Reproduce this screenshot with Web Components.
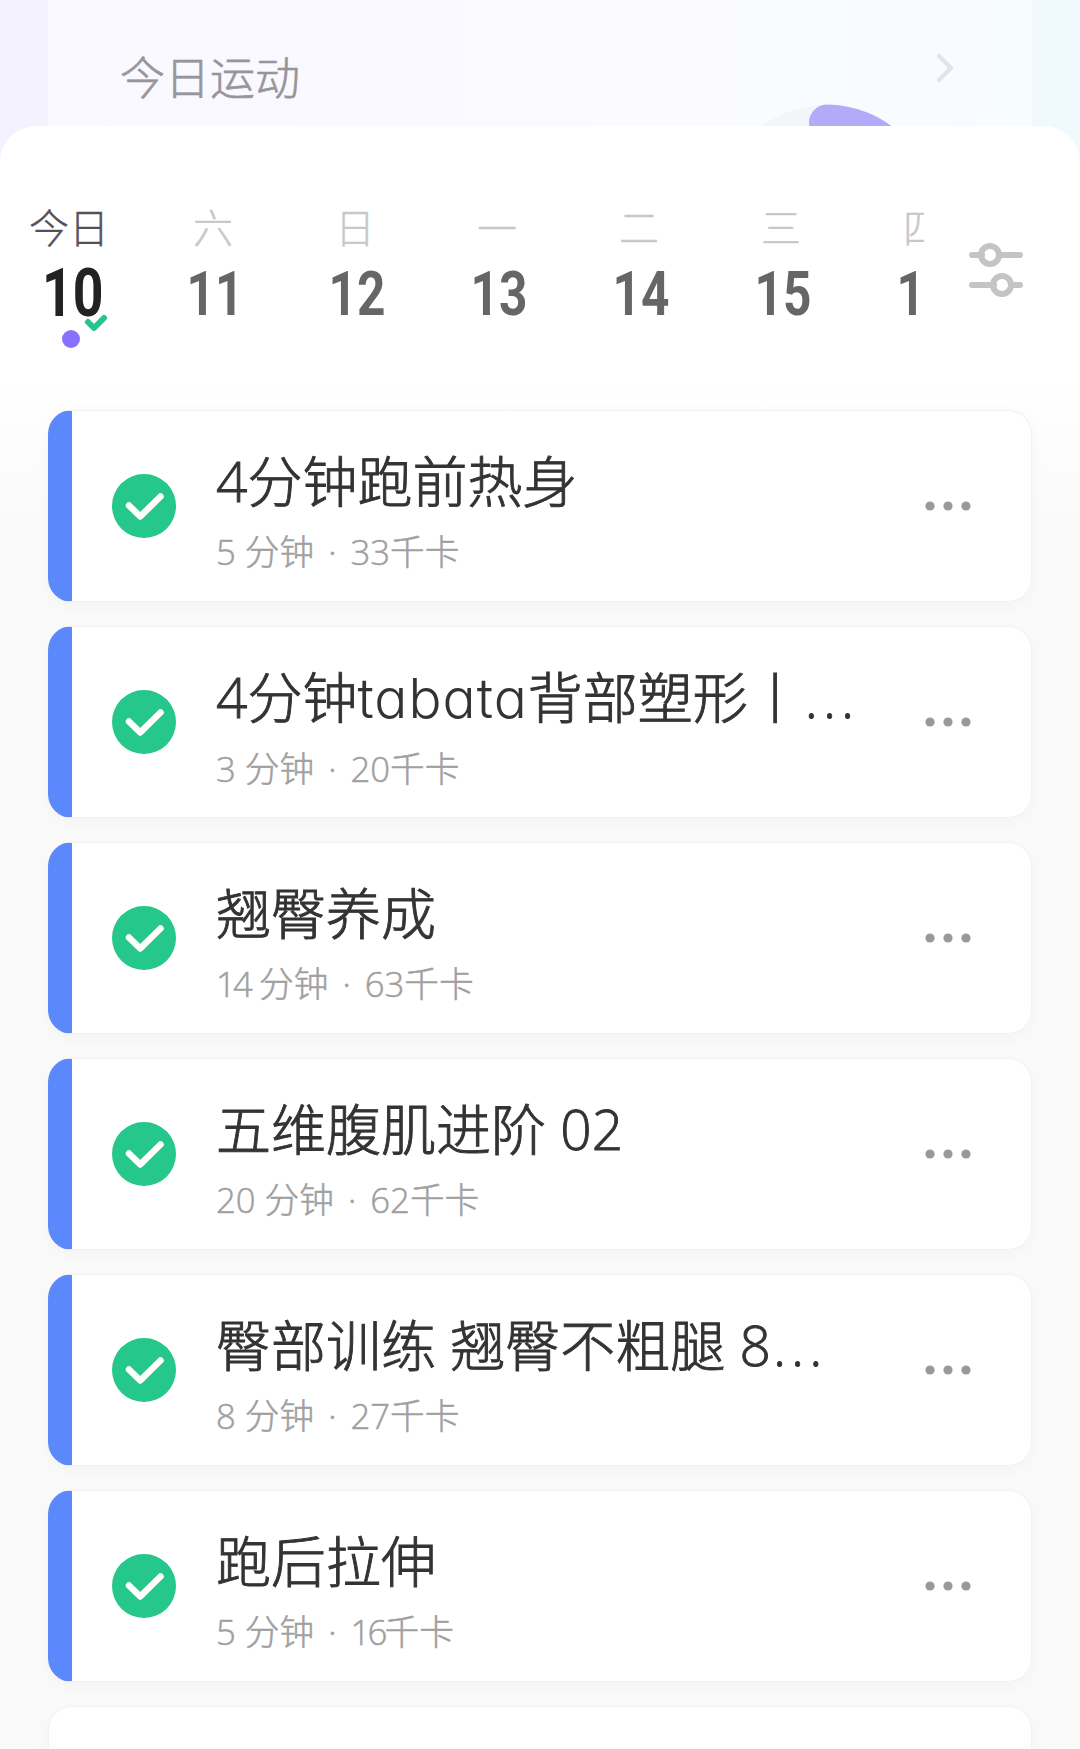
<!DOCTYPE html>
<html lang="zh-CN">
<head>
<meta charset="utf-8">
<title>今日运动</title>
<style>
  body {
    margin: 0;
    font-family: "Open Sans", "Noto Sans CJK SC", sans-serif;
    font-weight: 300;
  }
</style>
</head>
<body>
<workout-page>
  <today-banner slot="banner">今日运动</today-banner>
  <week-strip slot="week">
    <week-day label="今日" date="10" active></week-day>
    <week-day label="六" date="11"></week-day>
    <week-day label="日" date="12"></week-day>
    <week-day label="一" date="13"></week-day>
    <week-day label="二" date="14"></week-day>
    <week-day label="三" date="15"></week-day>
    <week-day label="四" date="16"></week-day>
  </week-strip>
  <workout-card time="5" energy="33">4分钟跑前热身</workout-card>
  <workout-card time="3" energy="20">4分钟<span class="latin">tabata</span>背部塑形丨<span class="more">...</span></workout-card>
  <workout-card time="14" energy="63">翘臀养成</workout-card>
  <workout-card time="20" energy="62">五维腹肌进阶 02</workout-card>
  <workout-card time="8" energy="27">臀部训练 翘臀不粗腿 8<span class="more">...</span></workout-card>
  <workout-card time="5" energy="16">跑后拉伸</workout-card>
  <workout-card empty></workout-card>
</workout-page>

<script>
const page = document.createElement('template')
page.innerHTML = `
<style>
  :host {
    display: flex;
    flex-direction: column;
    height: 1749px;
    overflow: hidden;
    background: linear-gradient(90deg, #f4f2ff 0%, #f6f5ff 45%, #f3f6fe 88%, #effafd 100%);
  }
  main {
    flex: 1;
    min-height: 0;
    border-radius: 36px 36px 0 0;
    background: linear-gradient(#fff 250px, #fafafa 400px);
  }
  .list {
    display: flex;
    flex-direction: column;
    gap: 24px;
    padding: 0 48px;
  }
</style>
<slot name="banner"></slot>
<main>
  <slot name="week"></slot>
  <div class="list"><slot></slot></div>
</main>
`
class WorkoutPage extends HTMLElement {
  constructor () {
    super()
    this.attachShadow({ mode: 'open' })
    this.shadowRoot.appendChild(page.content.cloneNode(true))
  }
}

const banner = document.createElement('template')
banner.innerHTML = `
<style>
  :host {
    display: block;
    height: 126px;
    padding: 0 48px;
    overflow: hidden;
  }
  .card {
    position: relative;
    display: flex;
    justify-content: space-between;
    align-items: flex-start;
    height: 126px;
    box-sizing: border-box;
    padding: 46px 76px 0 72px;
    background: linear-gradient(90deg, #f9f8ff 0%, #fbfaff 62%, #fafbff 70%, #f7fcff 100%);
  }
  h2 {
    margin: 2px 0 0;
    font-size: 45px;
    line-height: 60px;
    font-weight: inherit;
    color: #96959b;
    -webkit-text-stroke: .6px;
  }
  .ring {
    position: absolute;
    right: 94px;
    top: 102px;
  }
  .arrow { margin-top: 7px; }
  svg { display: block; }
</style>
<div class="card">
  <svg class="ring" width="224" height="224" viewBox="0 0 224 224" fill="none" stroke-width="36">
    <circle cx="112" cy="113" r="92" stroke="#f4f5f8"/>
    <path d="M113 20.500A92 92 0 0 1 204 113" stroke="#b5aaf9" stroke-linecap="round"/>
  </svg>
  <h2><slot></slot></h2>
  <svg class="arrow" width="20" height="30" viewBox="0 0 20 30" fill="none" stroke="#e1e3e6" stroke-width="4">
    <path d="M2 2L15 15L2 28"/>
  </svg>
</div>
`
class TodayBanner extends HTMLElement {
  constructor () {
    super()
    this.attachShadow({ mode: 'open' })
    this.shadowRoot.appendChild(banner.content.cloneNode(true))
  }
}

const strip = document.createElement('template')
strip.innerHTML = `
<style>
  :host {
    display: flex;
    height: 284px;
    box-sizing: border-box;
    padding-top: 76px;
  }
  .days {
    display: flex;
    width: 924px;
    overflow: hidden;
  }
  svg {
    display: block;
    margin: 38px 0 0 44px;
  }
</style>
<div class="days"><slot></slot></div>
<svg width="56" height="60" viewBox="0 0 56 60" fill="none" stroke="#c4c4c4" stroke-width="6" stroke-linecap="round">
  <path d="M4 15H14M31 15H52M4 45H26M43 45H52"/>
  <circle cx="22" cy="15" r="9"/>
  <circle cx="34" cy="45" r="9"/>
</svg>
`
class WeekStrip extends HTMLElement {
  constructor () {
    super()
    this.attachShadow({ mode: 'open' })
    this.shadowRoot.appendChild(strip.content.cloneNode(true))
  }
}

const day = document.createElement('template')
day.innerHTML = `
<style>
  :host {
    position: relative;
    display: flex;
    flex: none;
    flex-direction: column;
    align-items: center;
    width: 142px;
    color: #666;
  }
  .label {
    font-size: 40px;
    line-height: 52px;
    color: #c8c8c8;
    -webkit-text-stroke: .4px;
  }
  .date {
    font: bold 62px/62px Roboto, sans-serif;
    margin-top: 9px;
    padding-left: 6px;
    transform: scaleX(.8);
  }
  svg { display: none; }
  :host([active]) {
    width: 138px;
    margin-right: 4px;
    color: #222;
  }
  :host([active]) .label {
    color: #55505c;
  }
  :host([active]) .date {
    font-size: 67px;
    margin-top: 8px;
    padding-left: 8px;
  }
  :host([active]) svg {
    display: block;
    position: absolute;
    left: 60px;
    top: 110px;
  }
</style>
<span class="label"></span>
<span class="date"></span>
<svg width="54" height="40" viewBox="0 0 54 40">
  <circle cx="11" cy="27" r="9" fill="#8672ff"/>
  <path d="M28 10L34 16L44 6" fill="none" stroke="#27c48b" stroke-width="6" stroke-linecap="round" stroke-linejoin="round"/>
</svg>
`
class WeekDay extends HTMLElement {
  constructor () {
    super()
    this.attachShadow({ mode: 'open' })
    this.shadowRoot.appendChild(day.content.cloneNode(true))
  }

  connectedCallback () {
    this.shadowRoot.querySelector('.label').textContent = this.getAttribute('label')
    this.shadowRoot.querySelector('.date').textContent = this.getAttribute('date')
  }
}

const card = document.createElement('template')
card.innerHTML = `
<style>
  :host {
    display: flex;
    flex: none;
    align-items: center;
    height: 192px;
    box-sizing: border-box;
    padding-right: 60px;
    border: 1px solid #f1f1f1;
    border-left: 24px solid #5b89fc;
    border-radius: 24px;
    background: #fff;
    box-shadow: 0 4px 18px rgba(0, 0, 0, .03);
  }
  :host([empty]) {
    border-left: 1px solid #f1f1f1;
  }
  :host([empty]) svg {
    display: none;
  }
  .text {
    flex: 1;
    min-width: 0;
    margin-left: 40px;
    padding-top: 6px;
    white-space: nowrap;
  }
  .title {
    font-size: 55px;
    line-height: 80px;
    color: #333;
    -webkit-text-stroke: .9px;
  }
  ::slotted(.latin) {
    font-family: Inter, sans-serif;
    font-feature-settings: "cv11";
    letter-spacing: 1px;
    -webkit-text-stroke: 0;
  }
  ::slotted(.more) {
    letter-spacing: 5px;
    margin-left: 2px;
  }
  .info {
    font-size: 34.700px;
    line-height: 50px;
    margin-top: 6px;
    color: #a0a0a0;
    -webkit-text-stroke: .5px;
  }
  .info i {
    font-style: normal;
    padding: 0 5px;
  }
  .narrow {
    letter-spacing: -2.800px;
  }
  .check {
    margin-left: 40px;
  }
  svg {
    display: block;
    flex: none;
  }
</style>
<svg class="check" width="64" height="64" viewBox="0 0 64 64">
  <circle cx="32" cy="32" r="32" fill="#26c78a"/>
  <path d="M17 31.500L28.200 42.500L48.500 22.500" fill="none" stroke="#fff" stroke-width="6.500" stroke-linecap="round" stroke-linejoin="round"/>
</svg>
<div class="text">
  <div class="title"><slot></slot></div>
  <div class="info"><span class="time"></span> 分钟 <i>·</i> <span class="energy"></span>千卡</div>
</div>
<svg width="46" height="10" viewBox="0 0 46 10" fill="#999">
  <circle cx="5" cy="5" r="4.600"/>
  <circle cx="23" cy="5" r="4.600"/>
  <circle cx="41" cy="5" r="4.600"/>
</svg>
`
class WorkoutCard extends HTMLElement {
  constructor () {
    super()
    this.attachShadow({ mode: 'open' })
    this.shadowRoot.appendChild(card.content.cloneNode(true))
  }

  connectedCallback () {
    if (this.hasAttribute('empty')) {
      this.shadowRoot.querySelector('.text').remove()
      return
    }
    this.setNumber('time')
    this.setNumber('energy')
  }

  setNumber (name) {
    const element = this.shadowRoot.querySelector(`.${name}`)
    const value = this.getAttribute(name)
    element.textContent = value
    // the figure 1 takes less room than the others
    element.classList.toggle('narrow', value.startsWith('1'))
  }
}

window.customElements.define('workout-page', WorkoutPage)
window.customElements.define('today-banner', TodayBanner)
window.customElements.define('week-strip', WeekStrip)
window.customElements.define('week-day', WeekDay)
window.customElements.define('workout-card', WorkoutCard)
</script>
</body>
</html>
